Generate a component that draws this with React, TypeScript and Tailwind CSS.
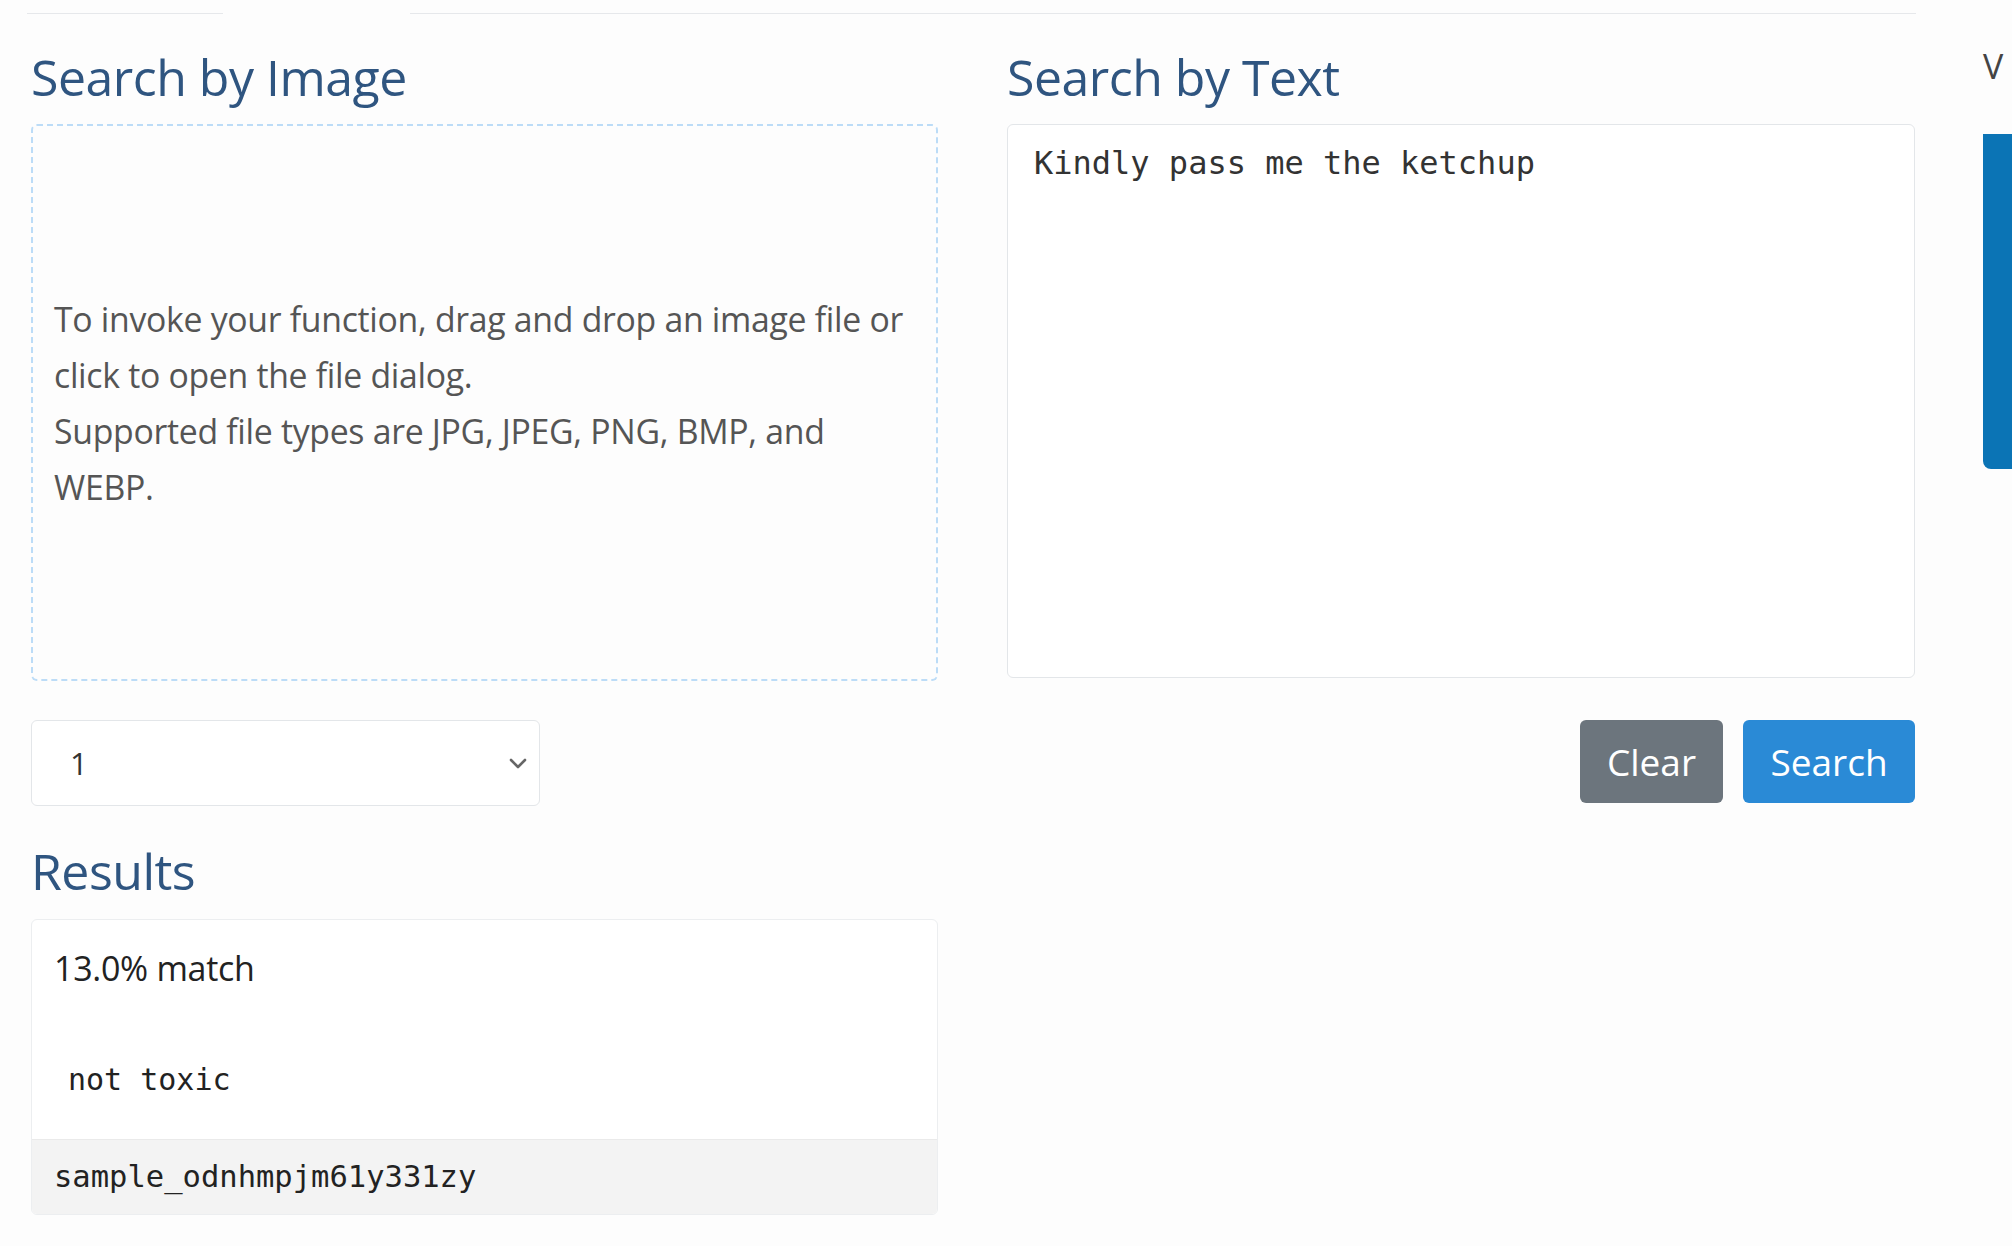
import React from "react"

const sans = "font-['Open_Sans','Liberation_Sans',sans-serif]"
const mono = "font-['DejaVu_Sans_Mono','Liberation_Mono',monospace]"

function Heading({ children }: { children: React.ReactNode }) {
  return (
    <h2 className={`${sans} text-[50px] leading-[62px] font-normal text-[#2f5580] tracking-[-0.5px]`}>
      {children}
    </h2>
  )
}

export default function App() {
  return (
    <div className="relative w-[2012px] h-[1246px] overflow-hidden bg-[#fdfdfd]">
      {/* tab strip underline */}
      <div className="flex h-[14px] pl-[27px] pr-[96px]">
        <div className="w-[196px] border-b border-[#e6e8eb]" />
        <div className="w-[187px]" />
        <div className="flex-1 border-b border-[#e6e8eb]" />
      </div>

      <div className="flex pl-[31px] pt-[32px]">
        {/* left column */}
        <div className="w-[907px] flex flex-col">
          <Heading>Search by Image</Heading>
          <div className="mt-[16px] h-[557px] rounded-md border-2 border-dashed border-[#bcdcf7] flex items-center px-[21px]">
            <p className={`${sans} text-[33.8px] leading-[56px] text-[#555] tracking-[-0.3px]`}>
              To invoke your function, drag and drop an image file or click to open the file dialog.
              <br />
              Supported file types are JPG, JPEG, PNG, BMP, and WEBP.
            </p>
          </div>

          <div className="mt-[39px] w-[509px] h-[86px] rounded-md border border-[#e3e6e9] bg-white flex items-center justify-between pl-[38px] pr-[10px]">
            <span className={`${sans} text-[31px] text-[#333]`}>1</span>
            <svg width="22" height="16" viewBox="0 0 22 16" fill="none" stroke="#666" strokeWidth="2.6" strokeLinecap="round" strokeLinejoin="round">
              <path d="M4 5l7 7 7-7" />
            </svg>
          </div>

          <div className="mt-[34px]">
            <Heading>Results</Heading>
          </div>

          <div className="mt-[17px] h-[296px] rounded-md border border-[#eceef0] bg-white flex flex-col overflow-hidden">
            <div className="flex-1 px-[22px] pt-[20px]">
              <p className={`${sans} text-[34px] leading-[56px] text-[#222] tracking-[-0.3px]`}>13.0% match</p>
              <pre className={`${mono} mt-[62px] ml-[14px] text-[30px] leading-[44px] text-[#222]`}>not toxic</pre>
            </div>
            <div className="h-[75px] bg-[#f3f3f3] border-t border-[#eaeaea] flex items-center px-[22px]">
              <code className={`${mono} text-[30.5px] text-[#222]`}>sample_odnhmpjm61y331zy</code>
            </div>
          </div>
        </div>

        {/* right column */}
        <div className="ml-[69px] w-[908px] flex flex-col">
          <Heading>Search by Text</Heading>
          <div className="mt-[16px] h-[554px] rounded-md border border-[#e3e6e9] bg-white px-[26px] pt-[14px]">
            <p className={`${mono} text-[32px] leading-[48px] text-[#333]`}>Kindly pass me the ketchup</p>
          </div>
          <div className="mt-[42px] flex justify-end gap-[20px]">
            <button className={`${sans} h-[83px] w-[143px] rounded-md bg-[#6c757d] text-white text-[37px]`}>Clear</button>
            <button className={`${sans} h-[83px] w-[172px] rounded-md bg-[#2a8ad6] text-white text-[37px]`}>Search</button>
          </div>
        </div>

        {/* clipped next column */}
        <div className="ml-[68px] flex-1 flex flex-col">
          <span className={`${sans} text-[34px] leading-[40px] text-[#444]`}>V</span>
          <div className="mt-[48px] h-[335px] rounded-bl-lg bg-[#0b74b5]" />
        </div>
      </div>
    </div>
  )
}
